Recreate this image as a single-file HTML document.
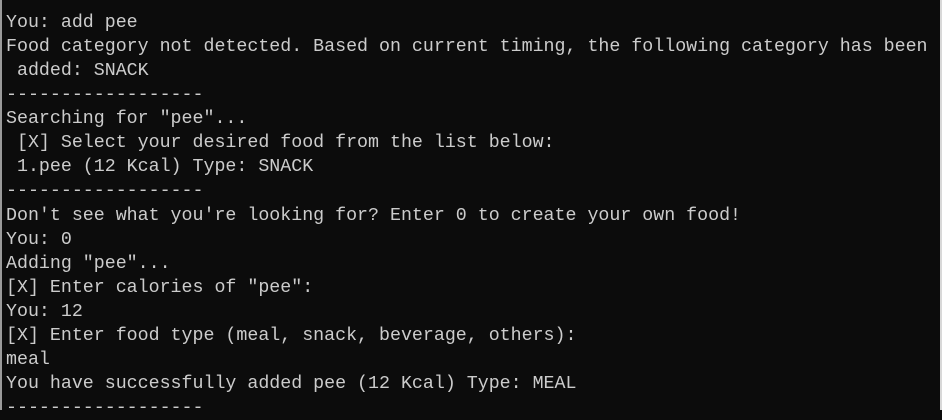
<!DOCTYPE html>
<html><head><meta charset="utf-8"><style>
html,body{margin:0;padding:0;}
body{width:942px;height:410px;overflow:hidden;background:#0c0c0c;position:relative;}
.l{position:absolute;left:0;top:0;width:2px;height:410px;background:#9a9a9a;}
.r{position:absolute;right:0;top:0;width:2px;height:410px;background:#d8d8d8;}
pre{margin:0;position:absolute;left:6px;top:11px;font-family:"Liberation Mono",monospace;font-size:18.3px;line-height:24.07px;color:#cccccc;white-space:pre;}
</style></head><body>
<div class="l"></div><div class="r"></div>
<pre>You: add pee
Food category not detected. Based on current timing, the following category has been
 added: SNACK
------------------
Searching for "pee"...
 [X] Select your desired food from the list below:
 1.pee (12 Kcal) Type: SNACK
------------------
Don't see what you're looking for? Enter 0 to create your own food!
You: 0
Adding "pee"...
[X] Enter calories of "pee":
You: 12
[X] Enter food type (meal, snack, beverage, others):
meal
You have successfully added pee (12 Kcal) Type: MEAL
------------------</pre>
</body></html>
